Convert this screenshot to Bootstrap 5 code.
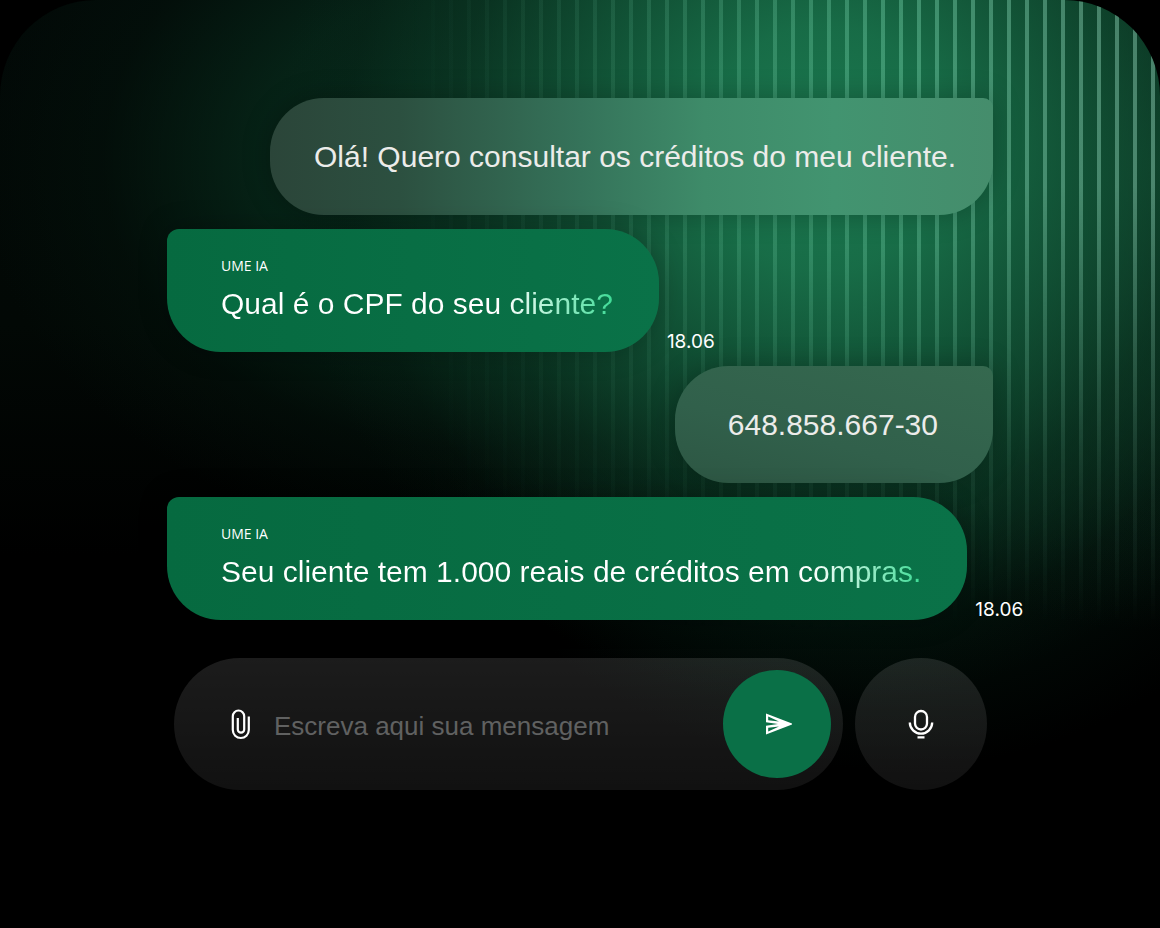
<!DOCTYPE html>
<html lang="pt-BR">
<head>
<meta charset="utf-8">
<meta name="viewport" content="width=device-width, initial-scale=1">
<title>UME IA</title>
<link href="https://cdn.jsdelivr.net/npm/bootstrap@5.3.0/dist/css/bootstrap.min.css" rel="stylesheet">
<style>
  body { background: #000; font-family: "Liberation Sans", Arial, sans-serif; color: #fff; }
  .stage {
    padding-top: 98px;
    border-radius: 96px 96px 0 0;
    overflow: hidden;
    isolation: isolate;
    background:
      radial-gradient(ellipse 47% 60% at 71% 16%, rgba(28,126,83,.94) 0%, rgba(26,119,78,.88) 22%, rgba(20,95,62,.74) 45%, rgba(14,68,44,.44) 68%, rgba(8,40,26,.15) 87%, rgba(4,20,13,0) 100%),
      radial-gradient(ellipse 40% 50% at 100% 18%, rgba(15,68,44,.75) 0%, rgba(12,56,36,.55) 45%, rgba(4,24,15,0) 100%),
      radial-gradient(ellipse 44% 42% at 42% 17%, rgba(9,52,34,.85) 0%, rgba(7,42,27,.75) 45%, rgba(4,22,14,.4) 75%, rgba(2,10,7,0) 100%),
      radial-gradient(ellipse 38% 38% at 76% 45%, rgba(5,36,23,.8) 0%, rgba(2,14,9,0) 100%),
      linear-gradient(180deg, #020907 0%, #020805 35%, #000 60%);
  }
  /* vertical light bars, fading towards the left and the bottom */
  .stage::before {
    content: "";
    position: absolute;
    inset: 0;
    z-index: -1;
    background: linear-gradient(90deg, transparent 35%, rgba(140,235,195,.1) 52%, rgba(140,235,195,.34) 78%, rgba(160,225,200,.42) 100%);
    -webkit-mask-image: repeating-linear-gradient(90deg, #000 0 3px, transparent 3px 17px, #000 17px 18px), linear-gradient(180deg, #000 0%, #000 20%, rgba(0,0,0,.6) 35%, rgba(0,0,0,.25) 50%, transparent 68%);
    -webkit-mask-composite: source-in;
    mask-composite: intersect;
  }
  .chat { max-width: 826px; }
  .thread { gap: 14px; }
  .bubble { font-size: 30px; line-height: 36px; white-space: nowrap; flex: none; box-shadow: 0 0 28px rgba(0,0,0,.26); }
  .bubble-user {
    padding: 41px 37px 40px 44px;
    color: #ececea;
    background: linear-gradient(90deg, #2b4539 0%, #2c5040 18%, #35735a 43%, #3e8b69 60%, #429470 78%, #458d6c 100%);
    border-radius: 54px 10px 54px 54px;
  }
  .bubble-code {
    padding-left: 53px;
    padding-right: 55px;
    background: linear-gradient(195deg, #35694f 0%, #31604b 60%, #2d5643 100%);
  }
  .bubble-bot {
    padding: 27px 46px 30px 54px;
    background: linear-gradient(90deg, #066a40, #0a7248);
    border-radius: 12px 54px 54px 54px;
  }
  .sender { font: 14px/20px "Open Sans", sans-serif; margin-bottom: 10px; }
  .typed {
    color: transparent;
    background: linear-gradient(90deg, #fff calc(100% - 110px), #3edb96 100%);
    -webkit-background-clip: text;
    background-clip: text;
  }
  .stamp { font: 19px/20px Inter, sans-serif; }
  .composer { margin-top: 38px; gap: 12px; padding: 0 6px 0 7px; }
  .field, .round-mic { background: linear-gradient(180deg, rgba(255,255,255,.11), rgba(255,255,255,.065)); }
  .field { border-radius: 66px; padding: 12px 12px 12px 54px; min-width: 0; }
  .field input { font-size: 26px; line-height: 36px; color: #ececea; min-width: 0; outline: 0; margin-left: 20px; }
  .field input::placeholder { color: #606161; opacity: 1; }
  .icon-btn { color: #fff; }
  .round-send { width: 108px; height: 108px; background: #0a7047; }
  .round-mic { width: 132px; height: 132px; }
</style>
</head>
<body>
<main class="stage position-relative min-vh-100 px-3">
  <div class="chat mx-auto">
    <div class="thread d-flex flex-column">
      <div class="d-flex justify-content-end">
        <div class="bubble bubble-user">Olá! Quero consultar os créditos do meu cliente.</div>
      </div>
      <div class="d-flex align-items-end gap-2">
        <div class="bubble bubble-bot">
          <div class="sender">UME IA</div>
          <span class="typed">Qual é o CPF do seu cliente?</span>
        </div>
        <time class="stamp">18.06</time>
      </div>
      <div class="d-flex justify-content-end">
        <div class="bubble bubble-user bubble-code">648.858.667-30</div>
      </div>
      <div class="d-flex align-items-end gap-2">
        <div class="bubble bubble-bot">
          <div class="sender">UME IA</div>
          <span class="typed">Seu cliente tem 1.000 reais de créditos em compras.</span>
        </div>
        <time class="stamp">18.06</time>
      </div>
    </div>
    <form class="composer d-flex align-items-center">
      <div class="field d-flex align-items-center flex-grow-1">
        <button type="button" class="icon-btn btn border-0 p-0 d-flex" aria-label="Anexar arquivo">
          <svg width="26" height="32" viewBox="0 0 26 32" fill="none" stroke="currentColor" stroke-width="2.2"><path d="M20.8 8.5V22a8 8 0 0 1-16 0V8.200a5.700 5.700 0 0 1 11.400 0V21.500a3.200 3.200 0 0 1-6.400 0V10"/></svg>
        </button>
        <input type="text" class="flex-grow-1 bg-transparent border-0 p-0 pt-1" placeholder="Escreva aqui sua mensagem" aria-label="Escreva aqui sua mensagem">
        <button type="submit" class="icon-btn round-send btn rounded-circle border-0 p-0 flex-shrink-0" aria-label="Enviar">
          <svg width="30" height="24" viewBox="0 0 30 24"><path fill="currentColor" fill-rule="evenodd" d="M4 1.500 31 12 4 22.500V13.800L16 12 4 10.200ZM6.200 4.600V8.300L17 9.600ZM6.200 19.400V15.700L17 14.400Z"/></svg>
        </button>
      </div>
      <button type="button" class="icon-btn round-mic btn rounded-circle border-0 p-0 flex-shrink-0" aria-label="Gravar áudio">
        <svg width="28" height="30" viewBox="0 0 28 30" fill="none" stroke="currentColor" stroke-width="2.300"><rect x="8" y="2" width="12" height="18.500" rx="6"/><path d="M2.800 13.500a11.200 11.200 0 0 0 22.400 0M10.500 28.300h7"/></svg>
      </button>
    </form>
  </div>
</main>
<script src="https://cdn.jsdelivr.net/npm/bootstrap@5.3.0/dist/js/bootstrap.bundle.min.js"></script>
</body>
</html>
